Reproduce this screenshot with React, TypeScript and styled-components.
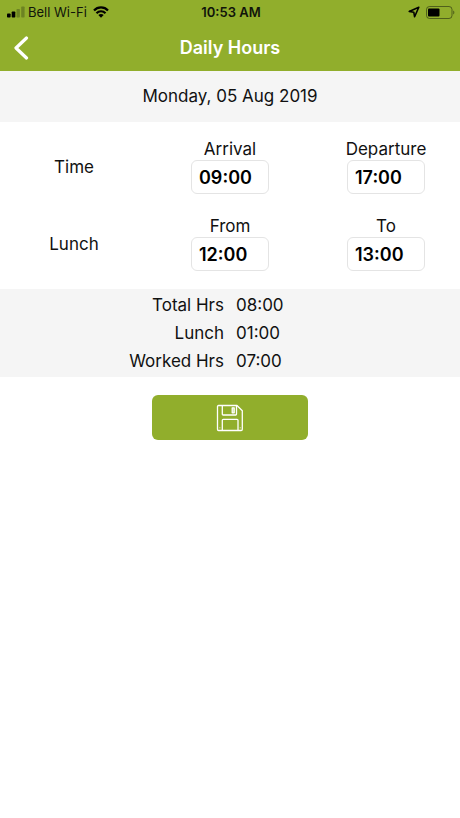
import React, { useState } from "react";
import styled, { createGlobalStyle } from "styled-components";

const green = "#91ae2c";

const GlobalStyle = createGlobalStyle`
  *, *::before, *::after { box-sizing: border-box; }
  body {
    margin: 0;
    background: #fff;
    color: #111;
    font-family: Inter, "Liberation Sans", sans-serif;
    font-size: 17px;
    line-height: 22px;
  }
`;

const Screen = styled.div`
  display: flex;
  flex-direction: column;
  min-height: 100vh;
`;

const Header = styled.header`
  background: ${green};
`;

const StatusBar = styled.div`
  display: grid;
  grid-template-columns: 1fr auto 1fr;
  align-items: center;
  height: 24px;
  padding: 0 5px 0 7px;
  font-size: 13px;
  line-height: 16px;
  color: #10140a;
`;

const StatusGroup = styled.div<{ $end?: boolean }>`
  display: flex;
  align-items: center;
  gap: 6px;
  justify-content: ${(p) => (p.$end ? "flex-end" : "flex-start")};
`;

const Carrier = styled.span`
  display: flex;
  align-items: center;
  gap: 3px;
`;

const Clock = styled.time`
  font-weight: 600;
`;

const NavBar = styled.nav`
  display: grid;
  grid-template-columns: 48px 1fr 48px;
  align-items: center;
  height: 47px;
`;

const BackButton = styled.button`
  display: flex;
  align-items: center;
  height: 44px;
  padding: 0 0 0 13px;
  border: 0;
  background: none;
  color: #fff;
  cursor: pointer;
`;

const Title = styled.h1`
  margin: 0;
  text-align: center;
  font-size: 18px;
  font-weight: 600;
  line-height: 24px;
  color: #fff;
`;

const DateBand = styled.div`
  padding: 14px 0 15px;
  background: #f5f5f5;
  text-align: center;
`;

const Hours = styled.form`
  display: flex;
  flex-direction: column;
`;

const Entries = styled.div`
  display: flex;
  flex-direction: column;
  gap: 22px;
  padding: 17px 0 18px;
`;

const EntryRow = styled.fieldset`
  display: grid;
  grid-template-columns: 37fr 41fr 37fr;
  align-items: center;
  margin: 0;
  padding: 0;
  border: 0;
`;

const RowName = styled.span`
  text-align: center;
`;

const Field = styled.label`
  display: flex;
  flex-direction: column;
  align-items: center;
  line-height: 21px;
`;

const TimeInput = styled.input`
  width: 78px;
  height: 34px;
  padding: 0 7px;
  border: 1px solid #e4e4e4;
  border-radius: 6px;
  background: #fff;
  color: #000;
  font: inherit;
  font-size: 18px;
  font-weight: 600;
`;

const Totals = styled.dl`
  margin: 0;
  padding: 2px 0;
  background: #f5f5f5;
`;

const TotalRow = styled.div`
  display: grid;
  grid-template-columns: 1fr 1fr;
  gap: 12px;
  line-height: 28px;
`;

const TotalName = styled.dt`
  text-align: right;
`;

const TotalValue = styled.dd`
  margin: 0;
`;

const SaveButton = styled.button`
  display: flex;
  align-items: center;
  justify-content: center;
  align-self: center;
  width: 34%;
  height: 45px;
  margin-top: 18px;
  padding: 0;
  border: 0;
  border-radius: 6px;
  background: ${green};
  color: #fff;
  cursor: pointer;
`;

const SignalIcon = () => (
  <svg width="18" height="12" viewBox="0 0 18 12" fill="currentColor" aria-hidden="true">
    <rect x="0" y="7.5" width="3.6" height="4" rx="0.8" fill="#000" />
    <rect x="4.7" y="5.5" width="3.6" height="6" rx="0.8" fill="#000" />
    <rect x="9.5" y="3" width="3.4" height="8.5" rx="0.8" opacity="0.28" />
    <rect x="14.2" y="0.5" width="3.4" height="11" rx="0.8" opacity="0.28" />
  </svg>
);

const WifiIcon = () => (
  <svg width="16" height="12" viewBox="0 0 16 12" aria-hidden="true">
    <g fill="none" stroke="#000" strokeWidth="2.2">
      <path d="M1 4.4C4.8 0.3 11.2 0.3 15 4.4" />
      <path d="M3.5 7.2C6 4.6 10 4.6 12.5 7.2" />
    </g>
    <path d="M5.3 9C6.8 7.6 9.2 7.6 10.7 9L8 11.8Z" fill="#000" />
  </svg>
);

const LocationIcon = () => (
  <svg width="12" height="12" viewBox="0 0 12 12" aria-hidden="true">
    <path
      d="M10.8 1.2L1.2 5.4L5.8 6.2L6.6 10.8Z"
      fill="none"
      stroke="#000"
      strokeWidth="1.6"
      strokeLinejoin="round"
    />
  </svg>
);

const BatteryIcon = () => (
  <svg width="29" height="13" viewBox="0 0 29 13" aria-hidden="true">
    <rect x="0.5" y="0.5" width="25.5" height="12" rx="3" fill="none" stroke="currentColor" opacity="0.5" />
    <rect x="2" y="2.5" width="11.5" height="8" rx="1" fill="#000" />
    <path d="M27.2 4.5C28.8 5.2 28.8 7.8 27.2 8.5Z" fill="currentColor" opacity="0.5" />
  </svg>
);

const BackIcon = () => (
  <svg width="16" height="24" viewBox="0 0 16 24" aria-hidden="true">
    <path d="M13.5 2L3 12L13.5 22" fill="none" stroke="currentColor" strokeWidth="3.2" strokeLinecap="round" strokeLinejoin="round" />
  </svg>
);

const SaveIcon = () => (
  <svg width="28" height="28" viewBox="0 0 28 28" fill="none" stroke="currentColor" strokeWidth="1.3" strokeLinejoin="round" aria-hidden="true">
    <path d="M2.5 1.5H21L26.3 6.8V25.3Q26.3 26.5 25.1 26.5H2.5Q1.5 26.5 1.5 25.3V2.7Q1.5 1.5 2.5 1.5Z" />
    <path d="M6.3 1.5V10.2Q6.3 11 7.1 11H19.7Q20.5 11 20.5 10.2V1.5" />
    <rect x="16.2" y="3.8" width="2" height="5" fill="currentColor" fillOpacity="0.5" />
    <path d="M6.3 26.5V16.3Q6.3 15.3 7.3 15.3H21Q22 15.3 22 16.3V26.5" />
    <path d="M3.5 23.8H4.3M23.8 23.8H24.6" strokeWidth="1" />
  </svg>
);

const rows = [
  { name: "Time", fields: [["Arrival", "09:00"], ["Departure", "17:00"]] },
  { name: "Lunch", fields: [["From", "12:00"], ["To", "13:00"]] },
];

const totals = [
  ["Total Hrs", "08:00"],
  ["Lunch", "01:00"],
  ["Worked Hrs", "07:00"],
];

function TimeField({ label, initial }: { label: string; initial: string }) {
  const [value, setValue] = useState(initial);
  return (
    <Field>
      {label}
      <TimeInput type="text" inputMode="numeric" value={value} onChange={(e) => setValue(e.target.value)} />
    </Field>
  );
}

export default function App() {
  return (
    <Screen>
      <GlobalStyle />
      <Header>
        <StatusBar>
          <StatusGroup>
            <Carrier>
              <SignalIcon />
              Bell Wi-Fi
            </Carrier>
            <WifiIcon />
          </StatusGroup>
          <Clock>10:53 AM</Clock>
          <StatusGroup $end>
            <LocationIcon />
            <BatteryIcon />
          </StatusGroup>
        </StatusBar>
        <NavBar>
          <BackButton type="button" aria-label="Back">
            <BackIcon />
          </BackButton>
          <Title>Daily Hours</Title>
        </NavBar>
      </Header>
      <main>
        <DateBand>Monday, 05 Aug 2019</DateBand>
        <Hours onSubmit={(e) => e.preventDefault()}>
          <Entries>
            {rows.map((row) => (
              <EntryRow key={row.name} aria-label={row.name}>
                <RowName>{row.name}</RowName>
                {row.fields.map(([label, initial]) => (
                  <TimeField key={label} label={label} initial={initial} />
                ))}
              </EntryRow>
            ))}
          </Entries>
          <Totals>
            {totals.map(([name, value]) => (
              <TotalRow key={name}>
                <TotalName>{name}</TotalName>
                <TotalValue>{value}</TotalValue>
              </TotalRow>
            ))}
          </Totals>
          <SaveButton type="submit" aria-label="Save">
            <SaveIcon />
          </SaveButton>
        </Hours>
      </main>
    </Screen>
  );
}
